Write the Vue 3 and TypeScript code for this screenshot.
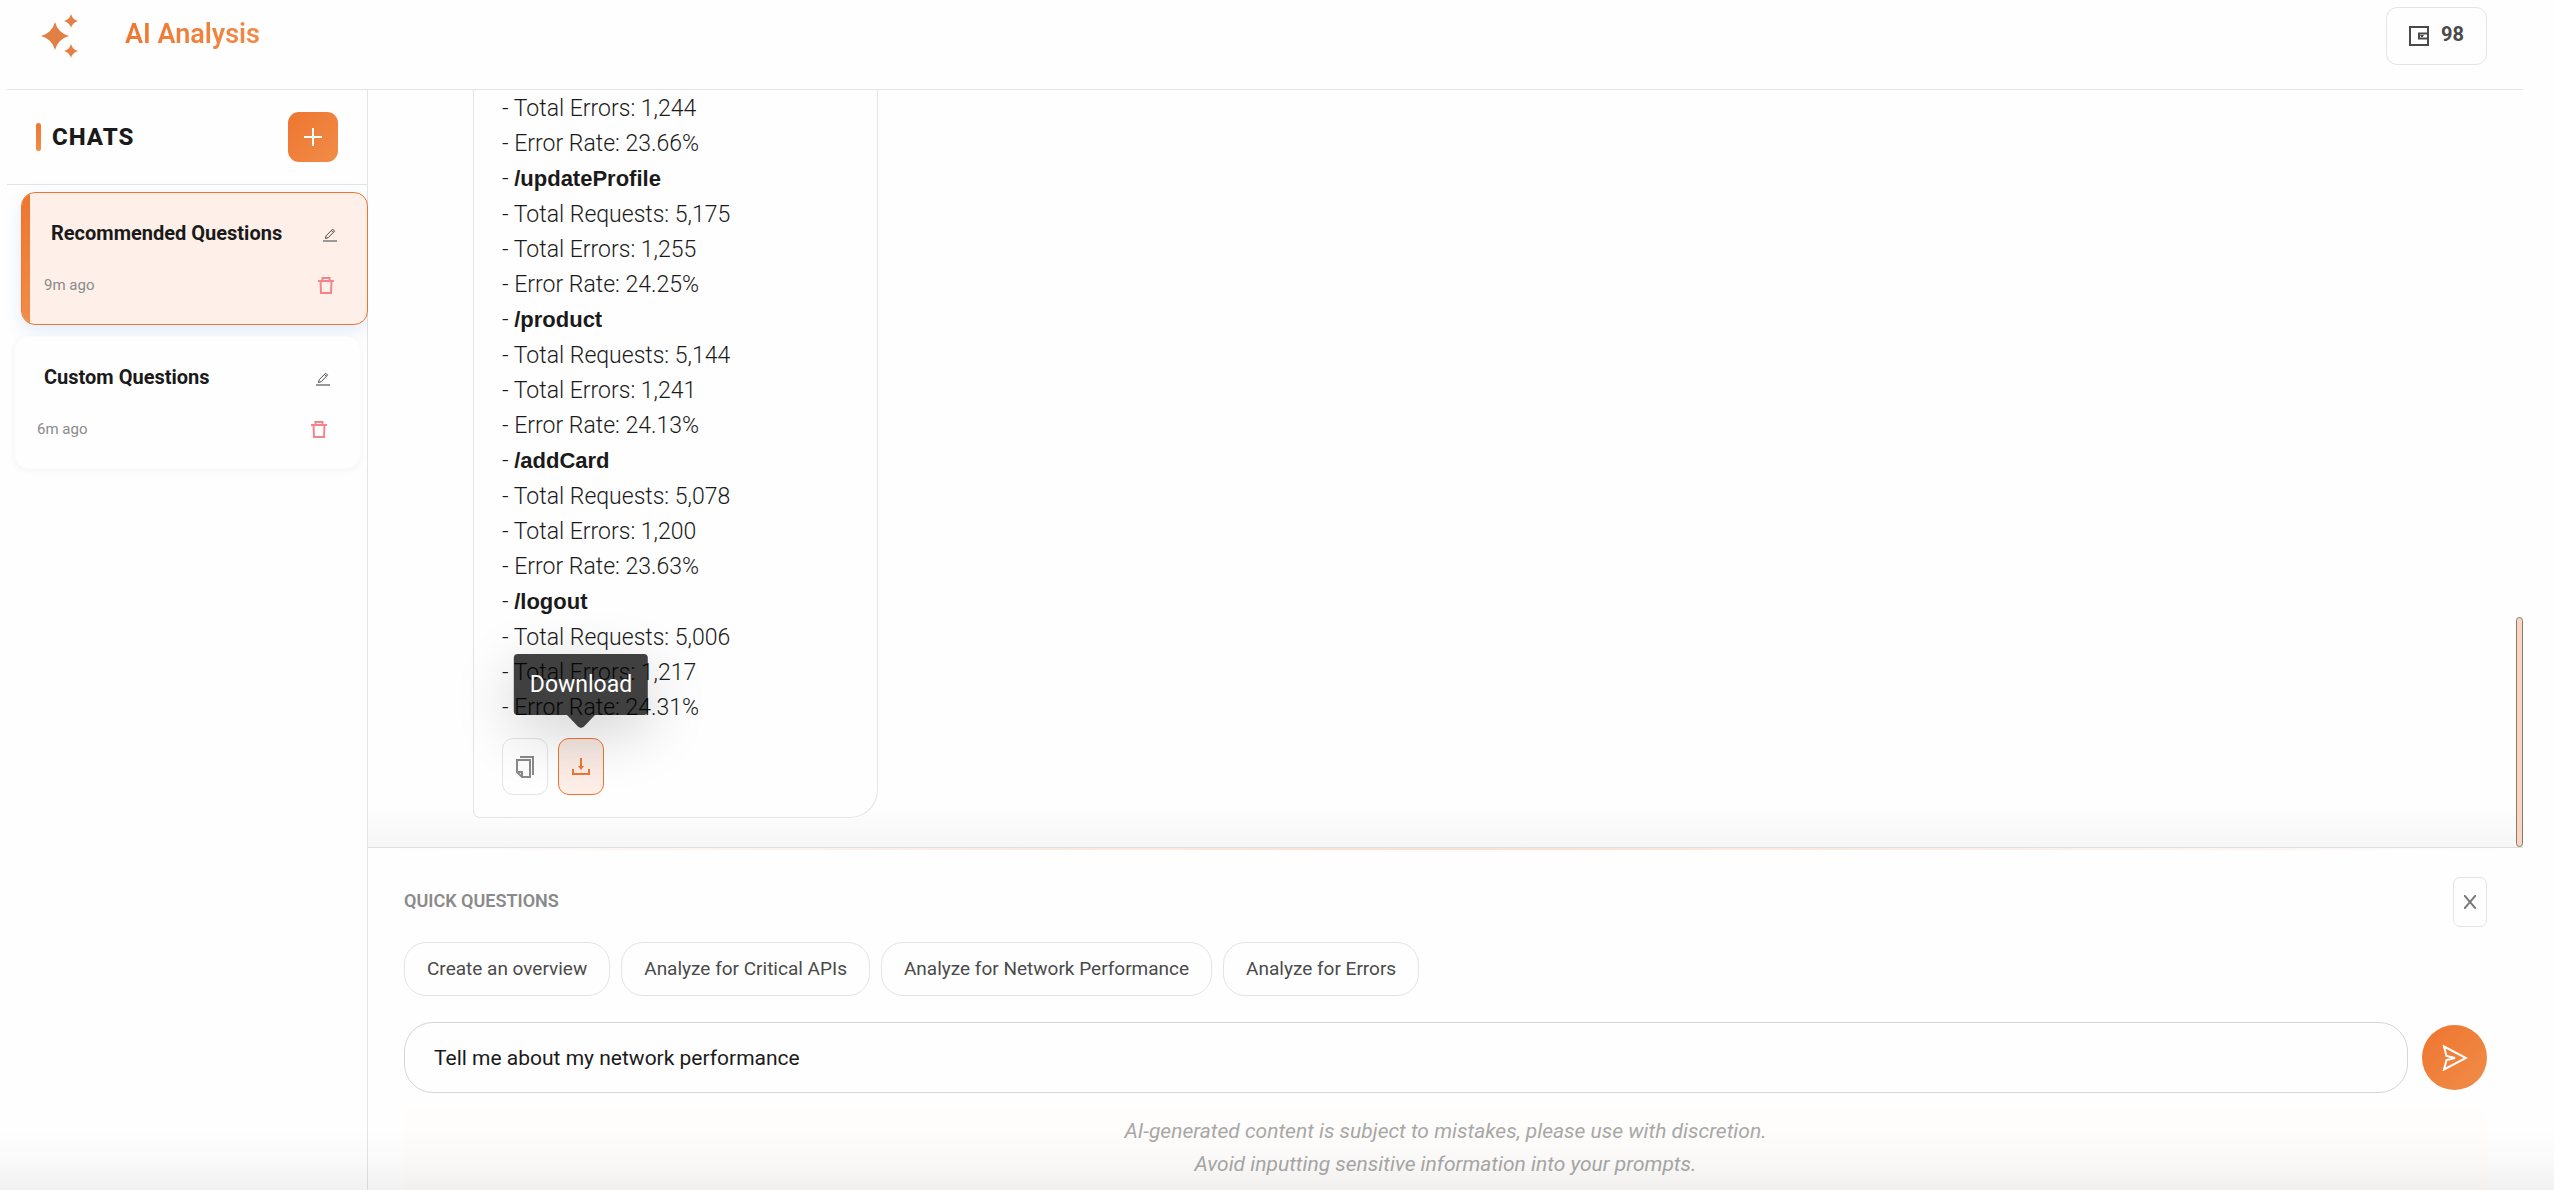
<script setup lang="ts">
import { ref } from 'vue'

interface Chat {
  id: number
  title: string
  age: string
}

interface Endpoint {
  path?: string
  requests?: string
  errors: string
  rate: string
}

const credits = ref(98)
const activeChat = ref(1)
const prompt = ref('Tell me about my network performance')
const showQuick = ref(true)

const chats: Chat[] = [
  { id: 1, title: 'Recommended Questions', age: '9m ago' },
  { id: 2, title: 'Custom Questions', age: '6m ago' },
]

const endpoints: Endpoint[] = [
  { errors: '1,244', rate: '23.66%' },
  { path: '/updateProfile', requests: '5,175', errors: '1,255', rate: '24.25%' },
  { path: '/product', requests: '5,144', errors: '1,241', rate: '24.13%' },
  { path: '/addCard', requests: '5,078', errors: '1,200', rate: '23.63%' },
  { path: '/logout', requests: '5,006', errors: '1,217', rate: '24.31%' },
]

const quickQuestions: string[] = [
  'Create an overview',
  'Analyze for Critical APIs',
  'Analyze for Network Performance',
  'Analyze for Errors',
]
</script>

<template>
  <div class="app">
    <header class="topbar">
      <div class="brand">
        <svg class="logo" viewBox="0 0 38 46" aria-hidden="true">
          <path d="M14 9Q17 20 28 23Q17 26 14 37Q11 26 0 23Q11 20 14 9Z" />
          <path d="M30 1Q31.500 6.500 37 8Q31.500 9.500 30 15Q28.500 9.500 23 8Q28.500 6.500 30 1Z" />
          <path d="M30 31Q31.500 36.500 37 38Q31.500 39.500 30 45Q28.500 39.500 23 38Q28.500 36.500 30 31Z" />
        </svg>
        <h1 class="title">AI Analysis</h1>
      </div>
      <div class="credits">
        <svg class="wallet" viewBox="0 0 20 20" aria-hidden="true">
          <path d="M1 1H19V19H1ZM19 7.500H10V12.500H19" />
          <path class="thin" d="M11.500 9.500H14.500L13 11Z" />
        </svg>
        <span>{{ credits }}</span>
      </div>
    </header>

    <div class="body">
      <aside class="sidebar">
        <div class="side-head">
          <h2 class="side-title">CHATS</h2>
          <button class="add" type="button" aria-label="New chat">
            <svg viewBox="0 0 18 18" aria-hidden="true"><path d="M9 0V18M0 9H18" /></svg>
          </button>
        </div>
        <ul class="chat-list">
          <li
            v-for="chat in chats"
            :key="chat.id"
            class="chat"
            :class="{ active: chat.id === activeChat }"
            @click="activeChat = chat.id"
          >
            <div class="chat-top">
              <span class="chat-title">{{ chat.title }}</span>
              <button class="icon-btn edit" type="button" aria-label="Rename chat">
                <svg viewBox="0 0 14 14" aria-hidden="true">
                  <path d="M2.500 10.500L3.200 7.700L9.700 1.200L11.600 3.100L5.200 9.700ZM8.500 2.400L10.400 4.300" />
                  <path class="base" d="M0 13H14" />
                </svg>
              </button>
            </div>
            <div class="chat-bottom">
              <span class="chat-age">{{ chat.age }}</span>
              <button class="icon-btn trash" type="button" aria-label="Delete chat">
                <svg viewBox="0 0 16 17" aria-hidden="true">
                  <path d="M0 4H16M4.500 4V1H11.500V4M2.500 4L3 16H13L13.500 4" />
                </svg>
              </button>
            </div>
          </li>
        </ul>
      </aside>

      <main class="main">
        <section class="messages">
          <article class="bubble">
            <div class="answer">
              <template v-for="(item, i) in endpoints" :key="i">
                <p v-if="item.path" class="path">- <strong>{{ item.path }}</strong></p>
                <p v-if="item.requests">- Total Requests: {{ item.requests }}</p>
                <p>- Total Errors: {{ item.errors }}</p>
                <p>- Error Rate: {{ item.rate }}</p>
              </template>
            </div>
            <div class="actions">
              <button class="action" type="button" aria-label="Copy">
                <svg class="copy" viewBox="0 0 18 22" aria-hidden="true">
                  <path d="M1 4H14V21H6L1 16ZM1 16H6V21M4 1H17V19" />
                </svg>
              </button>
              <button class="action hot" type="button" aria-label="Download">
                <svg class="download" viewBox="0 0 18 18" aria-hidden="true">
                  <path d="M1 11V16H17V11M9 0V10" />
                  <path class="head" d="M6 8H12L9 12Z" />
                </svg>
                <span class="tooltip" role="tooltip">Download</span>
              </button>
            </div>
          </article>
          <div class="thumb" aria-hidden="true"></div>
        </section>

        <section class="composer">
          <div class="quick-head">
            <h3 class="quick-title">QUICK QUESTIONS</h3>
            <button class="close" type="button" aria-label="Hide quick questions" @click="showQuick = !showQuick">
              <svg viewBox="0 0 12 14" aria-hidden="true"><path d="M0 0L12 14M12 0L0 14" /></svg>
            </button>
          </div>
          <div v-if="showQuick" class="pills">
            <button v-for="q in quickQuestions" :key="q" class="pill" type="button" @click="prompt = q">{{ q }}</button>
          </div>
          <form class="ask" @submit.prevent>
            <input v-model="prompt" class="prompt" type="text" aria-label="Your question" />
            <button class="send" type="submit" aria-label="Send">
              <svg viewBox="0 0 26 26" aria-hidden="true">
                <path d="M2 1.500L24 13L2 24.500L4.500 15L13 13L4.500 11Z" />
              </svg>
            </button>
          </form>
          <p class="notice">
            AI-generated content is subject to mistakes, please use with discretion.<br />
            Avoid inputting sensitive information into your prompts.
          </p>
        </section>
      </main>
    </div>
  </div>
</template>

<style>
html,
body {
  background: #fefefe;
}
</style>

<style scoped>
.app {
  position: relative;
  display: flex;
  flex-direction: column;
  box-sizing: border-box;
  height: 100vh;
  padding: 0 31px 0 7px;
  overflow: hidden;
  background: #fefefe;
  color: #1a1a1a;
  font-family: Roboto, 'Liberation Sans', sans-serif;
}

.app::after {
  content: '';
  position: absolute;
  inset: auto 0 0 0;
  height: 64px;
  background: linear-gradient(to bottom, rgba(0, 0, 0, 0), rgba(0, 0, 0, 0.015) 50%, rgba(0, 0, 0, 0.05));
  pointer-events: none;
}

h1,
h2,
h3,
p,
ul {
  margin: 0;
  padding: 0;
}

button {
  padding: 0;
  border: 0;
  background: none;
  font-family: inherit;
  cursor: pointer;
}

svg {
  display: block;
  fill: none;
  stroke: currentColor;
}

.topbar {
  display: flex;
  justify-content: space-between;
  align-items: flex-start;
  padding: 7px 36px 24px 34px;
  border-bottom: 1px solid #e4e4e4;
}

.brand {
  display: flex;
  align-items: center;
  gap: 46px;
  height: 58px;
}

.logo {
  width: 38px;
  height: 46px;
  fill: #e37f45;
  stroke: none;
}

.title {
  padding-bottom: 4px;
  background: linear-gradient(135deg, #ee7530, #f08d48);
  background-clip: text;
  color: transparent;
  font-size: 27px;
  line-height: 32px;
  font-weight: 600;
}

.credits {
  display: flex;
  align-items: center;
  gap: 12px;
  box-sizing: border-box;
  height: 58px;
  padding: 0 22px;
  border: 1px solid #e4e4e4;
  border-radius: 11px;
  color: #4a4a4a;
  font-size: 20px;
  line-height: 28px;
  font-weight: 700;
}

.credits span {
  padding-bottom: 4px;
}

.wallet {
  width: 20px;
  height: 20px;
  stroke-width: 2;
}

.wallet .thin {
  stroke-width: 1;
}

.body {
  display: flex;
  flex: 1;
  min-height: 0;
}

.sidebar {
  flex: none;
  width: 360px;
  border-right: 1px solid #e4e4e4;
}

.side-head {
  display: flex;
  justify-content: space-between;
  align-items: center;
  padding: 22px 29px;
  border-bottom: 1px solid #e4e4e4;
}

.side-title {
  display: flex;
  align-items: center;
  gap: 11px;
  font-size: 24px;
  line-height: 30px;
  font-weight: 800;
  letter-spacing: 1px;
}

.side-title::before {
  content: '';
  width: 5px;
  height: 28px;
  border-radius: 3px;
  background: linear-gradient(#ee7530, #f08d48);
}

.add {
  display: grid;
  place-items: center;
  width: 50px;
  height: 50px;
  border-radius: 11px;
  background: linear-gradient(135deg, #ee7530, #f08d48);
  color: #fff;
}

.add svg {
  width: 18px;
  height: 18px;
  stroke-width: 2;
}

.chat-list {
  display: flex;
  flex-direction: column;
  gap: 11px;
  padding: 7px 6px 7px 7px;
  list-style: none;
}

.chat {
  position: relative;
  box-sizing: border-box;
  padding: 24px 30px 23px 22px;
  border: 1px solid #fbfbfb;
  border-radius: 14px;
  background: #fefefe;
  box-shadow: 0 2px 6px rgba(0, 0, 0, 0.04);
  overflow: hidden;
}

.chat.active {
  border-color: #ee7530;
  background: #fef0e9;
  box-shadow: 0 6px 18px rgba(60, 130, 220, 0.14);
  transform: translateX(7px);
}

.chat.active::before {
  content: '';
  position: absolute;
  inset: 0 auto 0 0;
  width: 8px;
  background: linear-gradient(#ee7530, #f08d48);
}

.chat-top {
  display: flex;
  justify-content: space-between;
  align-items: center;
  height: 32px;
  padding-left: 7px;
}

.chat-title {
  font-size: 20px;
  line-height: 32px;
  font-weight: 700;
}

.chat-bottom {
  display: flex;
  justify-content: space-between;
  align-items: center;
  height: 32px;
  margin-top: 20px;
  padding-right: 3px;
}

.chat-age {
  color: #8a8a8a;
  font-size: 15px;
  line-height: 32px;
}

.edit {
  padding-top: 4px;
  color: #4a4a4a;
}

.edit svg {
  width: 14px;
  height: 14px;
}

.edit .base {
  stroke: #999;
  stroke-width: 2;
}

.trash {
  color: #f5838a;
}

.trash svg {
  width: 16px;
  height: 17px;
  stroke-width: 2;
}

.main {
  display: flex;
  flex: 1;
  flex-direction: column;
  min-width: 0;
}

.messages {
  position: relative;
  display: flex;
  flex: 1;
  align-items: stretch;
  min-height: 0;
  padding: 0 105px 29px;
  background: linear-gradient(to top, #f6f6f6, #fefefe 40px);
}

.bubble {
  display: flex;
  flex-direction: column;
  justify-content: flex-end;
  gap: 13px;
  box-sizing: border-box;
  width: 405px;
  padding: 0 28px 22px;
  border: 1px solid #e4e4e4;
  border-top: 0;
  border-radius: 0 0 28px 7px;
  background: #fefefe;
}

.answer {
  font-size: 23px;
  line-height: 35px;
  font-weight: 300;
  white-space: nowrap;
}

.path {
  line-height: 36px;
}

.path strong {
  font-family: 'Liberation Sans', sans-serif;
  font-size: 22px;
  font-weight: 700;
}

.actions {
  display: flex;
  gap: 10px;
}

.action {
  position: relative;
  display: grid;
  place-items: center;
  width: 46px;
  height: 57px;
  border: 1px solid #e4e4e4;
  border-radius: 11px;
  color: #8a8a8a;
}

.action.hot {
  border-color: #ee7530;
  background: linear-gradient(#f5e7e0, #fef0e9);
  color: #ee7530;
}

.copy {
  width: 18px;
  height: 22px;
  stroke-width: 2;
}

.download {
  width: 18px;
  height: 18px;
  stroke-width: 2;
}

.download .head {
  fill: currentColor;
  stroke: none;
}

.tooltip {
  position: absolute;
  bottom: calc(100% + 24px);
  left: 50%;
  padding: 15px 16px 14px;
  border-radius: 4px;
  background: rgba(0, 0, 0, 0.75);
  box-shadow: 0 16px 60px rgba(0, 0, 0, 0.18);
  color: #fff;
  font-size: 23px;
  line-height: 32px;
  transform: translateX(-50%);
}

.tooltip::after {
  content: '';
  position: absolute;
  top: 100%;
  left: 50%;
  width: 28px;
  height: 13px;
  background: #404040;
  clip-path: polygon(0 0, 100% 0, 60% 90%, 50% 100%, 40% 90%);
  transform: translateX(-50%);
}

.thumb {
  position: absolute;
  right: 0;
  bottom: 0;
  box-sizing: border-box;
  width: 7px;
  height: 230px;
  border: 1px solid #857a74;
  border-radius: 4px;
  background: #fcd4bf;
}

.composer {
  position: relative;
  padding: 29px 36px 0;
  border-top: 1px solid #e0e0e0;
}

.composer::before {
  content: '';
  position: absolute;
  inset: 0 0 auto 0;
  height: 2px;
  background: linear-gradient(to right, rgba(238, 117, 48, 0), rgba(238, 117, 48, 0.22), rgba(238, 117, 48, 0));
}

.quick-head {
  display: flex;
  justify-content: space-between;
  align-items: center;
}

.quick-title {
  padding-bottom: 3px;
  color: #8a8a8a;
  font-size: 18px;
  line-height: 24px;
  font-weight: 600;
}

.close {
  display: grid;
  place-items: center;
  width: 34px;
  height: 50px;
  border: 1px solid #e4e4e4;
  border-radius: 7px;
  color: #777;
}

.close svg {
  width: 12px;
  height: 14px;
  stroke-width: 2;
}

.pills {
  display: flex;
  gap: 11px;
  margin-top: 15px;
}

.pill {
  height: 54px;
  padding: 0 22px;
  border: 1px solid #e4e4e4;
  border-radius: 22px;
  color: #4a4a4a;
  font-size: 19px;
  line-height: 24px;
}

.ask {
  display: flex;
  align-items: center;
  gap: 14px;
  margin-top: 26px;
}

.prompt {
  flex: 1;
  box-sizing: border-box;
  min-width: 0;
  height: 71px;
  padding: 0 29px;
  border: 1px solid #d6d6d6;
  border-radius: 29px;
  outline: 0;
  background: #fefefe;
  color: #1a1a1a;
  font-family: inherit;
  font-size: 21px;
}

.send {
  display: grid;
  place-items: center;
  width: 65px;
  height: 65px;
  border-radius: 50%;
  background: linear-gradient(135deg, #ee7530, #f08d48);
  color: #fff;
}

.send svg {
  width: 26px;
  height: 26px;
  stroke-width: 2;
}

.notice {
  padding: 8px 16px 9px;
  margin-top: 14px;
  border-radius: 14px 14px 0 0;
  background: #fefdfb;
  color: #a8a8a8;
  font-size: 21px;
  line-height: 33px;
  font-style: italic;
  text-align: center;
}
</style>
